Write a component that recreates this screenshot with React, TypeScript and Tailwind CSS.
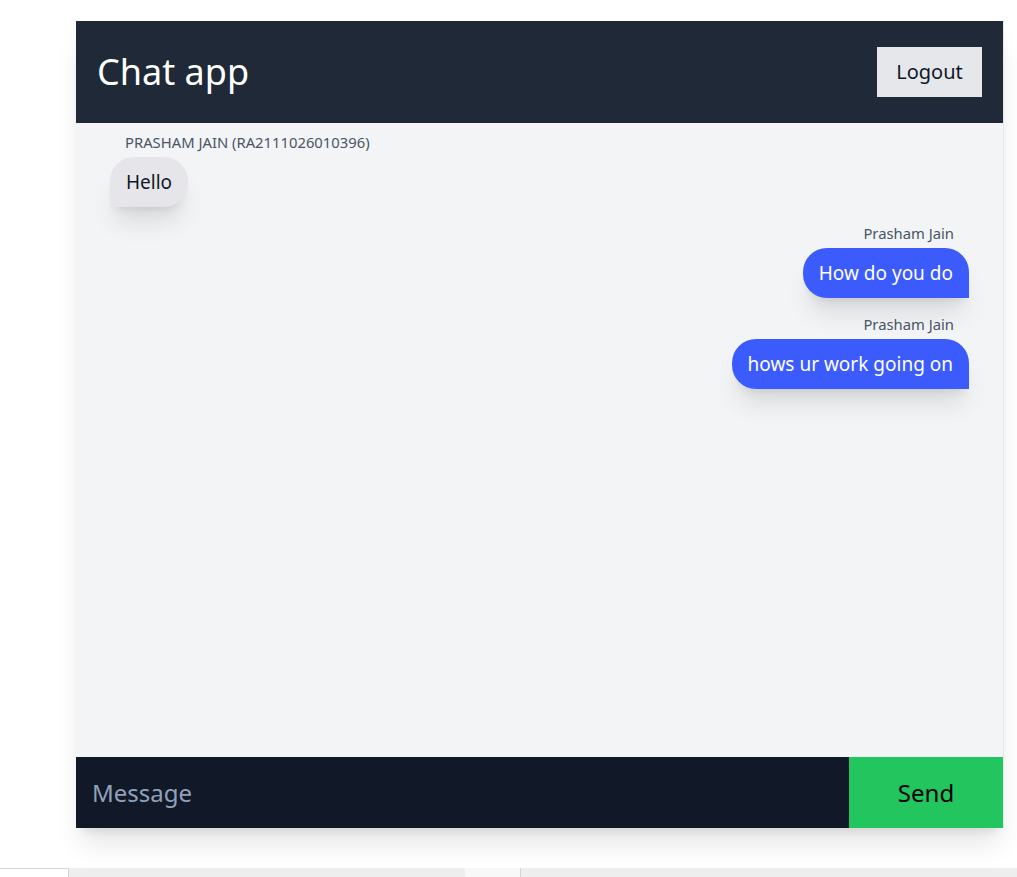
const messages = [
  { name: "PRASHAM JAIN (RA2111026010396)", text: "Hello", mine: false },
  { name: "Prasham Jain", text: "How do you do", mine: true },
  { name: "Prasham Jain", text: "hows ur work going on", mine: true },
];

export default function App() {
  return (
    <div className="min-h-[877px] bg-white font-['Noto_Sans',sans-serif] flex flex-col">
      <div className="ml-[76px] mt-[21px] w-[928px] h-[807px] flex flex-col shadow-xl border-r border-gray-200">
        {/* header */}
        <div className="h-[102px] bg-[#1f2937] flex items-center justify-between pl-[21px] pr-[21px]">
          <h1 className="text-4xl text-white">Chat app</h1>
          <button className="w-[105px] h-[50px] bg-[#e5e7eb] text-xl text-gray-900">Logout</button>
        </div>

        {/* messages */}
        <div className="flex-1 bg-[#f3f4f6] px-[34px] pt-[9px] flex flex-col gap-4 overflow-hidden">
          {messages.map((m, i) => (
            <div key={i} className={`flex flex-col ${m.mine ? "items-end" : "items-start"}`}>
              <div className="text-[14.8px]/[20px] text-gray-600 px-[15px] mb-[5px]">{m.name}</div>
              <div
                className={
                  m.mine
                    ? "bg-[#3b5bfd] text-white text-[19px]/[28px] px-4 py-[11px] rounded-3xl rounded-br-none shadow-xl"
                    : "bg-[#e6e6ea] text-gray-900 text-[19px]/[28px] px-4 py-[11px] rounded-3xl rounded-bl-none shadow-xl"
                }
              >
                {m.text}
              </div>
            </div>
          ))}
        </div>

        {/* input */}
        <div className="h-[71px] flex bg-[#111827]">
          <input
            placeholder="Message"
            className="flex-1 bg-transparent px-4 text-2xl text-white placeholder:text-slate-400 outline-none"
          />
          <button className="w-[154px] bg-[#22c55e] text-2xl text-black">Send</button>
        </div>
      </div>

      {/* bottom strip */}
      <div className="mt-[40px] h-[9px] flex">
        <div className="w-[69px] border-t border-r border-gray-300 bg-white" />
        <div className="w-[396px] bg-[#eeeeee]" />
        <div className="w-[56px] bg-[#f8f8f8] border-r border-gray-300" />
        <div className="flex-1 bg-[#eeeeee]" />
      </div>
    </div>
  );
}
